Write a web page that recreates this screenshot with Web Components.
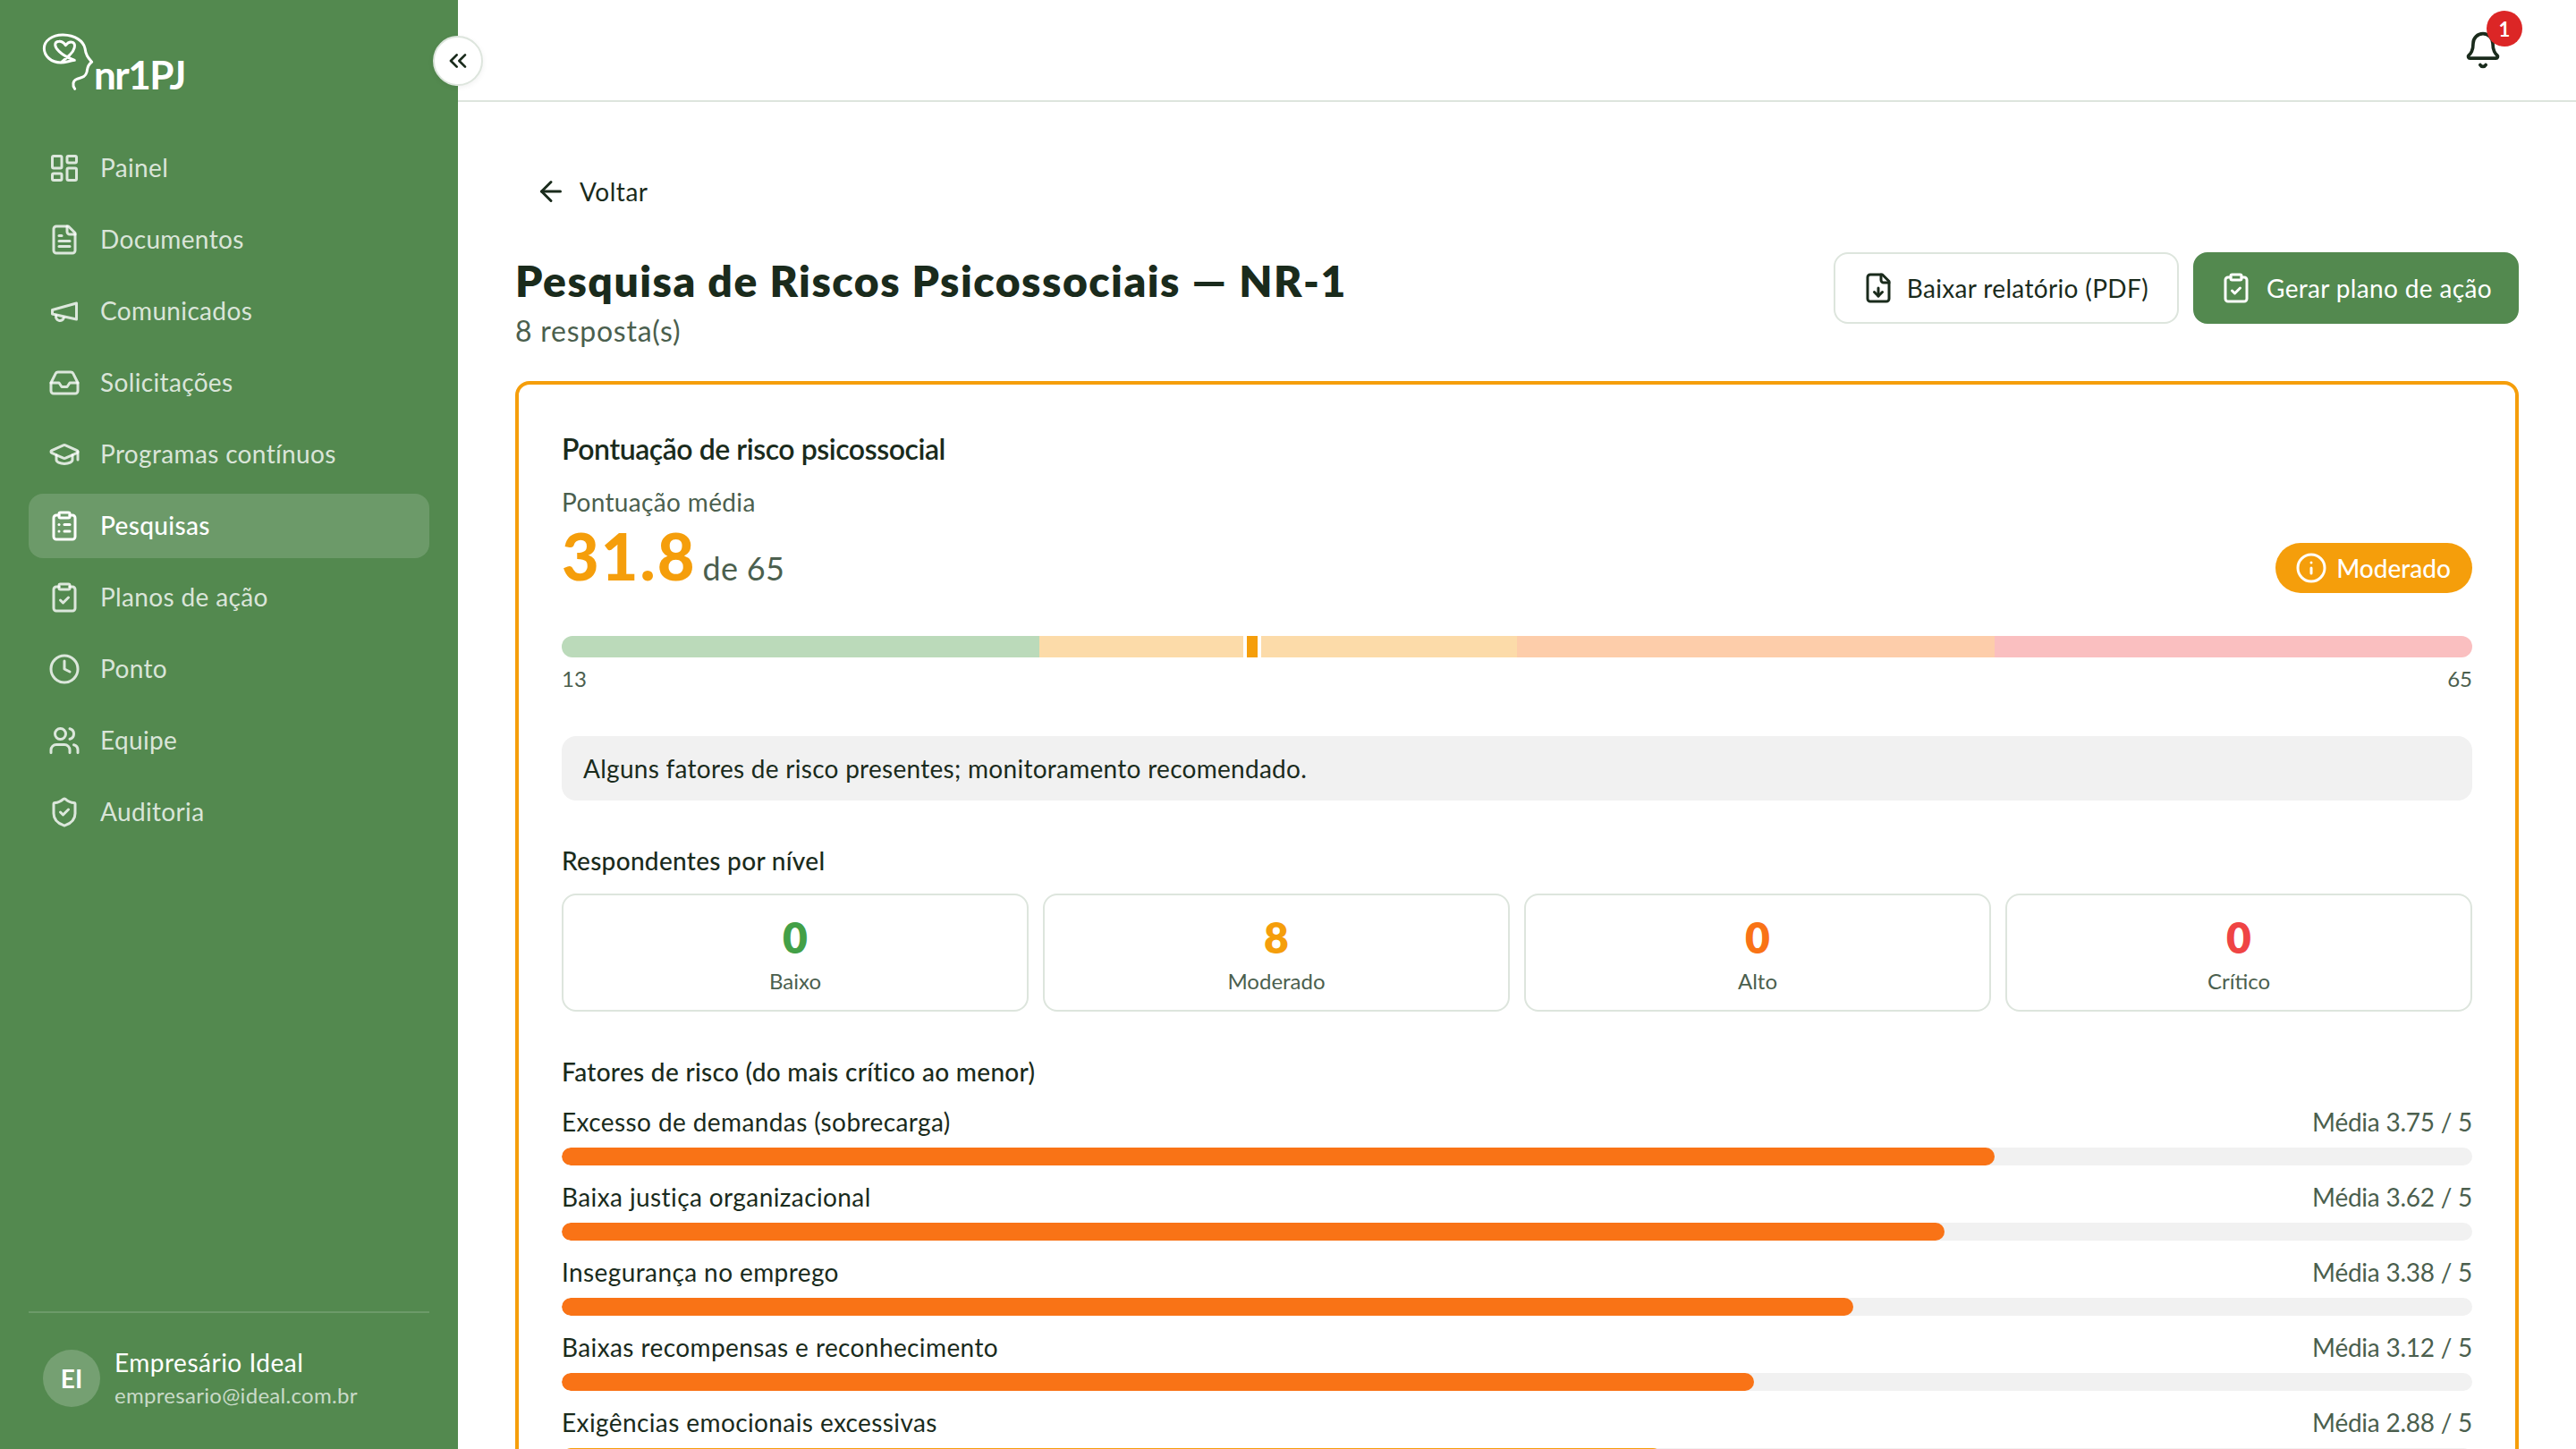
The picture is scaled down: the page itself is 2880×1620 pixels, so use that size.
<!DOCTYPE html>
<html lang="pt-BR">
<head>
<meta charset="utf-8">
<title>nr1PJ — Pesquisa de Riscos Psicossociais</title>
<style>
  html, body { margin: 0; height: 100%; overflow: hidden; }
  body { font-family: Lato, "Noto Sans", sans-serif; color: #1a2b1c; background: #fff; }
</style>
</head>
<body>
<app-shell>
  <app-sidebar slot="sidebar">
    <nav-item icon="dashboard" label="Painel"></nav-item>
    <nav-item icon="file" label="Documentos"></nav-item>
    <nav-item icon="megaphone" label="Comunicados"></nav-item>
    <nav-item icon="inbox" label="Solicitações"></nav-item>
    <nav-item icon="cap" label="Programas contínuos"></nav-item>
    <nav-item icon="clipboardList" label="Pesquisas" active></nav-item>
    <nav-item icon="clipboardCheck" label="Planos de ação"></nav-item>
    <nav-item icon="clock" label="Ponto"></nav-item>
    <nav-item icon="users" label="Equipe"></nav-item>
    <nav-item icon="shield" label="Auditoria"></nav-item>
  </app-sidebar>

  <app-topbar slot="topbar"></app-topbar>

  <back-link>Voltar</back-link>

  <page-heading title="Pesquisa de Riscos Psicossociais — NR-1" subtitle="8 resposta(s)">
    <ui-button slot="actions" icon="fileDown">Baixar relatório (PDF)</ui-button>
    <ui-button slot="actions" icon="clipboardCheck" primary>Gerar plano de ação</ui-button>
  </page-heading>

  <risk-card>
    <risk-gauge slot="gauge" score="31.8" min="13" max="65"></risk-gauge>
    <stat-tile slot="stats" value="0" label="Baixo" color="#43a047"></stat-tile>
    <stat-tile slot="stats" value="8" label="Moderado" color="#f59e0b"></stat-tile>
    <stat-tile slot="stats" value="0" label="Alto" color="#f97316"></stat-tile>
    <stat-tile slot="stats" value="0" label="Crítico" color="#ef4444"></stat-tile>
    <factor-row slot="factors" label="Excesso de demandas (sobrecarga)" value="3.75"></factor-row>
    <factor-row slot="factors" label="Baixa justiça organizacional" value="3.62"></factor-row>
    <factor-row slot="factors" label="Insegurança no emprego" value="3.38"></factor-row>
    <factor-row slot="factors" label="Baixas recompensas e reconhecimento" value="3.12"></factor-row>
    <factor-row slot="factors" label="Exigências emocionais excessivas" value="2.88" color="#f59e0b"></factor-row>
  </risk-card>
</app-shell>

<script>
// lucide-style icons, 24 grid
const ICONS = {
  dashboard: '<rect x="3" y="3" width="7" height="9" rx="1"/><rect x="14" y="3" width="7" height="5" rx="1"/><rect x="14" y="12" width="7" height="9" rx="1"/><rect x="3" y="16" width="7" height="5" rx="1"/>',
  file: '<path d="M15 2H6a2 2 0 0 0-2 2v16a2 2 0 0 0 2 2h12a2 2 0 0 0 2-2V7Z"/><path d="M14 2v4a2 2 0 0 0 2 2h4"/><path d="M10 9H8"/><path d="M16 13H8"/><path d="M16 17H8"/>',
  megaphone: '<path d="m3 11 18-5v12L3 14v-3z"/><path d="M11.6 16.8a3 3 0 1 1-5.8-1.6"/>',
  inbox: '<polyline points="22 12 16 12 14 15 10 15 8 12 2 12"/><path d="M5.45 5.11 2 12v6a2 2 0 0 0 2 2h16a2 2 0 0 0 2-2v-6l-3.45-6.89A2 2 0 0 0 16.76 4H7.24a2 2 0 0 0-1.79 1.11z"/>',
  cap: '<path d="M21.42 10.922a1 1 0 0 0-.019-1.838L12.83 5.18a2 2 0 0 0-1.66 0L2.6 9.08a1 1 0 0 0 0 1.832l8.57 3.908a2 2 0 0 0 1.66 0z"/><path d="M22 10v6"/><path d="M6 12.5V16a6 3 0 0 0 12 0v-3.5"/>',
  clipboardList: '<rect x="8" y="2" width="8" height="4" rx="1"/><path d="M16 4h2a2 2 0 0 1 2 2v14a2 2 0 0 1-2 2H6a2 2 0 0 1-2-2V6a2 2 0 0 1 2-2h2"/><path d="M12 11h4"/><path d="M12 16h4"/><path d="M8 11h.01"/><path d="M8 16h.01"/>',
  clipboardCheck: '<rect x="8" y="2" width="8" height="4" rx="1"/><path d="M16 4h2a2 2 0 0 1 2 2v14a2 2 0 0 1-2 2H6a2 2 0 0 1-2-2V6a2 2 0 0 1 2-2h2"/><path d="m9 14 2 2 4-4"/>',
  clock: '<circle cx="12" cy="12" r="10"/><polyline points="12 6 12 12 16 14"/>',
  users: '<path d="M16 21v-2a4 4 0 0 0-4-4H6a4 4 0 0 0-4 4v2"/><circle cx="9" cy="7" r="4"/><path d="M22 21v-2a4 4 0 0 0-3-3.87"/><path d="M16 3.13a4 4 0 0 1 0 7.75"/>',
  shield: '<path d="M20 13c0 5-3.5 7.5-7.66 8.95a1 1 0 0 1-.67-.01C7.5 20.5 4 18 4 13V6a1 1 0 0 1 1-1c2 0 4.5-1.2 6.24-2.72a1.17 1.17 0 0 1 1.52 0C14.51 3.81 17 5 19 5a1 1 0 0 1 1 1z"/><path d="m9 12 2 2 4-4"/>',
  bell: '<path d="M10.268 21a2 2 0 0 0 3.464 0"/><path d="M3.262 15.326A1 1 0 0 0 4 17h16a1 1 0 0 0 .74-1.673C19.41 13.956 18 12.499 18 8A6 6 0 0 0 6 8c0 4.499-1.411 5.956-2.738 7.326"/>',
  fileDown: '<path d="M15 2H6a2 2 0 0 0-2 2v16a2 2 0 0 0 2 2h12a2 2 0 0 0 2-2V7Z"/><path d="M14 2v4a2 2 0 0 0 2 2h4"/><path d="M12 18v-6"/><path d="m9 15 3 3 3-3"/>',
  arrowLeft: '<path d="m12 19-7-7 7-7"/><path d="M19 12H5"/>',
  chevrons: '<path d="m11 17-5-5 5-5"/><path d="m18 17-5-5 5-5"/>',
  info: '<circle cx="12" cy="12" r="10"/><path d="M12 16v-4"/><path d="M12 8h.01"/>'
};

function icon(name, size) {
  return `<svg width="${size}" height="${size}" viewBox="0 0 24 24" fill="none" stroke="currentColor" stroke-width="2" stroke-linecap="round" stroke-linejoin="round" style="display:block;flex:none">${ICONS[name]}</svg>`;
}

class AppShell extends HTMLElement {
  constructor() {
    super();
    this.attachShadow({ mode: 'open' });
    this.shadowRoot.innerHTML = `
      <style>
        :host { display: flex; height: 100vh; overflow: hidden; }
        main { flex: 1; min-width: 0; display: flex; flex-direction: column; }
        .content { flex: 1; min-height: 0; overflow: hidden; padding: 64px 64px 0; }
      </style>
      <slot name="sidebar"></slot>
      <main>
        <slot name="topbar"></slot>
        <div class="content"><slot></slot></div>
      </main>
    `;
  }
}

class AppSidebar extends HTMLElement {
  constructor() {
    super();
    this.attachShadow({ mode: 'open' });
    this.shadowRoot.innerHTML = `
      <style>
        :host {
          display: flex; flex-direction: column; flex: none; position: relative; z-index: 2;
          width: 512px; height: 100vh; background: #53894f; color: #fff; box-sizing: border-box;
        }
        .brand { display: flex; align-items: flex-start; height: 152px; box-sizing: border-box; padding: 30px 0 0 40px; flex: none; }
        .brand svg { display: block; flex: none; }
        .brand span { font-size: 44px; line-height: 36px; font-weight: 700; letter-spacing: -1.5px; margin-top: 35px; }
        nav { display: flex; flex-direction: column; gap: 8px; padding: 0 32px; }
        .collapse {
          position: absolute; top: 40px; right: -28px; width: 56px; height: 56px; box-sizing: border-box;
          display: flex; align-items: center; justify-content: center; padding: 0;
          border-radius: 50%; background: #fff; border: 2px solid #dde5dd; color: #1a2b1c;
          box-shadow: 0 2px 6px rgba(0,0,0,.06);
        }
        .user { margin: auto 32px 0; border-top: 2px solid rgba(255,255,255,.15); padding: 38px 16px 45px; display: flex; align-items: center; gap: 16px; }
        .avatar {
          width: 64px; height: 64px; border-radius: 50%; background: rgba(255,255,255,.2);
          display: flex; align-items: center; justify-content: center; font-size: 28px; font-weight: 700; flex: none;
        }
        .name { font-size: 28px; line-height: 34px; margin-bottom: 4px; letter-spacing: .5px; }
        .mail { font-size: 24px; line-height: 31px; color: rgba(255,255,255,.7); letter-spacing: .3px; }
      </style>
      <div class="brand">
        <svg width="65" height="80" viewBox="0 0 195 240" fill="none" stroke="#fff" stroke-width="9" stroke-linecap="round" stroke-linejoin="round">
          <path d="M131 208C122 196 124 180 138 175C152 170 166 170 171 152C174 138 173 128 188 118C176 104 168 96 165 72C160 48 132 28 92 27C54 26 28 48 28 72C28 98 52 120 84 120C100 120 112 114 130 112C116 106 96 100 78 82C62 68 60 50 78 49C90 48 96 56 100 62C106 54 114 48 124 52C136 58 130 80 114 94C104 104 96 110 84 120"/>
        </svg>
        <span>nr1PJ</span>
      </div>
      <nav><slot></slot></nav>
      <div class="user">
        <div class="avatar">EI</div>
        <div>
          <div class="name">Empresário Ideal</div>
          <div class="mail">empresario@ideal.com.br</div>
        </div>
      </div>
      <button class="collapse" aria-label="Recolher">${icon('chevrons', 32)}</button>
    `;
  }
}

class NavItem extends HTMLElement {
  connectedCallback() {
    if (this.shadowRoot) return;
    this.attachShadow({ mode: 'open' });
    this.shadowRoot.innerHTML = `
      <style>
        :host {
          display: flex; align-items: center; gap: 22px; height: 72px; padding: 0 22px;
          border-radius: 16px; font-size: 28px; letter-spacing: .35px; color: rgba(255,255,255,.8);
        }
        :host([active]) { background: rgba(255,255,255,.15); color: #fff; font-weight: 500; }
        span { margin-top: -2px; }
      </style>
      ${icon(this.getAttribute('icon'), 36)}
      <span>${this.getAttribute('label')}</span>
    `;
  }
}

class AppTopbar extends HTMLElement {
  constructor() {
    super();
    this.attachShadow({ mode: 'open' });
    this.shadowRoot.innerHTML = `
      <style>
        :host {
          display: flex; justify-content: flex-end; align-items: center; flex: none;
          height: 114px; box-sizing: border-box; padding: 0 64px; background: #fff; border-bottom: 2px solid #dde5dd;
        }
        .bell { position: relative; width: 80px; height: 80px; display: flex; align-items: center; justify-content: center; }
        .badge {
          position: absolute; top: -4px; right: -4px; width: 40px; height: 40px; border-radius: 50%;
          background: #dc2626; color: #fff; font-size: 22px; font-weight: 700;
          display: flex; align-items: center; justify-content: center;
        }
      </style>
      <div class="bell">${icon('bell', 44)}<span class="badge">1</span></div>
    `;
  }
}

class BackLink extends HTMLElement {
  constructor() {
    super();
    this.attachShadow({ mode: 'open' });
    this.shadowRoot.innerHTML = `
      <style>
        :host { display: flex; align-items: center; gap: 14px; width: max-content; height: 72px; padding: 0 22px; font-size: 28px; letter-spacing: .5px; }
      </style>
      ${icon('arrowLeft', 36)}<slot></slot>
    `;
  }
}

class PageHeading extends HTMLElement {
  connectedCallback() {
    if (this.shadowRoot) return;
    this.attachShadow({ mode: 'open' });
    this.shadowRoot.innerHTML = `
      <style>
        :host { display: flex; justify-content: space-between; align-items: flex-start; margin: 32px 0; }
        h1 { margin: 0; font-size: 48px; line-height: 64px; font-weight: 800; letter-spacing: 1.5px; }
        p { margin: 0; font-size: 32px; line-height: 48px; color: #4b5f4e; letter-spacing: .75px; }
        .actions { display: flex; gap: 16px; }
      </style>
      <div>
        <h1>${this.getAttribute('title')}</h1>
        <p>${this.getAttribute('subtitle')}</p>
      </div>
      <div class="actions"><slot name="actions"></slot></div>
    `;
  }
}

class UiButton extends HTMLElement {
  connectedCallback() {
    if (this.shadowRoot) return;
    this.attachShadow({ mode: 'open' });
    this.shadowRoot.innerHTML = `
      <style>
        :host {
          display: flex; align-items: center; gap: 14px; height: 80px; box-sizing: border-box; padding: 0 32px 0 30px;
          border: 2px solid #dde5dd; border-radius: 16px; background: #fff; font-size: 28px; letter-spacing: .35px;
        }
        :host([primary]) { background: #53894f; border-color: #53894f; color: #fff; gap: 16px; padding: 0 28px; }
      </style>
      ${icon(this.getAttribute('icon'), 36)}<slot></slot>
    `;
  }
}

class RiskGauge extends HTMLElement {
  connectedCallback() {
    if (this.shadowRoot) return;
    const score = +this.getAttribute('score');
    const min = +this.getAttribute('min');
    const max = +this.getAttribute('max');
    const pct = (score - min) / (max - min) * 100;
    this.attachShadow({ mode: 'open' });
    this.shadowRoot.innerHTML = `
      <style>
        :host { display: block; }
        .bar { position: relative; display: flex; height: 24px; }
        .bar i { flex: 1; }
        .bar i:first-child { border-radius: 12px 0 0 12px; }
        .bar i:nth-child(4) { border-radius: 0 12px 12px 0; }
        .mark {
          position: absolute; top: 0; bottom: 0; width: 12px; margin-left: -10px;
          background: #f59e0b; border: solid #fff; border-width: 0 4px;
        }
        .ends { display: flex; justify-content: space-between; margin-top: 6px; font-size: 24px; line-height: 36px; color: #4b5f4e; }
      </style>
      <div class="bar">
        <i style="background:#bbdaba"></i><i style="background:#fcdba9"></i><i style="background:#fdcdaa"></i><i style="background:#fabfc0"></i>
        <span class="mark" style="left:${pct}%"></span>
      </div>
      <div class="ends"><span>${min}</span><span>${max}</span></div>
    `;
  }
}

class RiskCard extends HTMLElement {
  constructor() {
    super();
    this.attachShadow({ mode: 'open' });
    this.shadowRoot.innerHTML = `
      <style>
        :host { display: block; border: 4px solid #f59e0b; border-radius: 16px; padding: 48px; background: #fff; }
        h2 { margin: 0 0 14px; font-size: 32px; line-height: 48px; font-weight: 600; letter-spacing: -.45px; }
        h3 { margin: 46px 0 16px; font-size: 28px; line-height: 42px; font-weight: 500; letter-spacing: .3px; }
        .score { display: flex; justify-content: space-between; align-items: flex-end; height: 123px; margin-bottom: 48px; }
        .left { align-self: flex-start; }
        .label { font-size: 28px; line-height: 42px; color: #4b5f4e; letter-spacing: .35px; }
        .num { display: flex; align-items: baseline; gap: 7px; line-height: 72px; margin-top: 3px; }
        .num b { font-size: 72px; font-weight: 900; color: #f59e0b; letter-spacing: 2px; }
        .num span { font-size: 36px; line-height: 36px; color: #4b5f4e; letter-spacing: .3px; }
        .pill {
          display: flex; align-items: center; gap: 10px; height: 56px; padding: 0 24px 0 22px; border-radius: 28px;
          background: #f59e0b; color: #fff; font-size: 28px; font-weight: 500;
        }
        .note { margin-top: 46px; height: 72px; padding: 0 24px; display: flex; align-items: center; background: #f1f1f1; border-radius: 16px; font-size: 28px; letter-spacing: .28px; }
        .stats { display: grid; grid-template-columns: repeat(4, 1fr); gap: 16px; }
        .factors { display: flex; flex-direction: column; gap: 14px; margin-top: -2px; }
      </style>
      <h2>Pontuação de risco psicossocial</h2>
      <div class="score">
        <div class="left">
          <div class="label">Pontuação média</div>
          <div class="num"><b>31.8</b><span>de 65</span></div>
        </div>
        <div class="pill">${icon('info', 36)}Moderado</div>
      </div>
      <slot name="gauge"></slot>
      <div class="note">Alguns fatores de risco presentes; monitoramento recomendado.</div>
      <h3>Respondentes por nível</h3>
      <div class="stats"><slot name="stats"></slot></div>
      <h3>Fatores de risco (do mais crítico ao menor)</h3>
      <div class="factors"><slot name="factors"></slot></div>
    `;
  }
}

class StatTile extends HTMLElement {
  connectedCallback() {
    if (this.shadowRoot) return;
    this.attachShadow({ mode: 'open' });
    this.shadowRoot.innerHTML = `
      <style>
        :host { display: block; box-sizing: border-box; height: 132px; padding-top: 16px; border: 2px solid #dde5dd; border-radius: 16px; text-align: center; }
        b { display: block; font-size: 48px; line-height: 62px; font-weight: 800; color: ${this.getAttribute('color')}; }
        span { display: block; font-size: 24px; line-height: 36px; color: #4b5f4e; }
      </style>
      <b>${this.getAttribute('value')}</b>
      <span>${this.getAttribute('label')}</span>
    `;
  }
}

class FactorRow extends HTMLElement {
  connectedCallback() {
    if (this.shadowRoot) return;
    const value = +this.getAttribute('value');
    this.attachShadow({ mode: 'open' });
    this.shadowRoot.innerHTML = `
      <style>
        :host { display: block; font-size: 28px; }
        .top { display: flex; justify-content: space-between; line-height: 42px; margin-bottom: 8px; }
        .top span:first-child { letter-spacing: .4px; }
        .top span:last-child { color: #4b5f4e; letter-spacing: -.25px; }
        .track { height: 20px; border-radius: 10px; background: #f1f1f1; overflow: hidden; }
        .fill { height: 100%; border-radius: 10px; background: ${this.getAttribute('color') || '#f97316'}; }
      </style>
      <div class="top"><span>${this.getAttribute('label')}</span><span>Média ${value.toFixed(2)} / 5</span></div>
      <div class="track"><div class="fill" style="width:${value / 5 * 100}%"></div></div>
    `;
  }
}

customElements.define('app-shell', AppShell);
customElements.define('app-sidebar', AppSidebar);
customElements.define('nav-item', NavItem);
customElements.define('app-topbar', AppTopbar);
customElements.define('back-link', BackLink);
customElements.define('page-heading', PageHeading);
customElements.define('ui-button', UiButton);
customElements.define('risk-gauge', RiskGauge);
customElements.define('risk-card', RiskCard);
customElements.define('stat-tile', StatTile);
customElements.define('factor-row', FactorRow);
</script>
</body>
</html>
